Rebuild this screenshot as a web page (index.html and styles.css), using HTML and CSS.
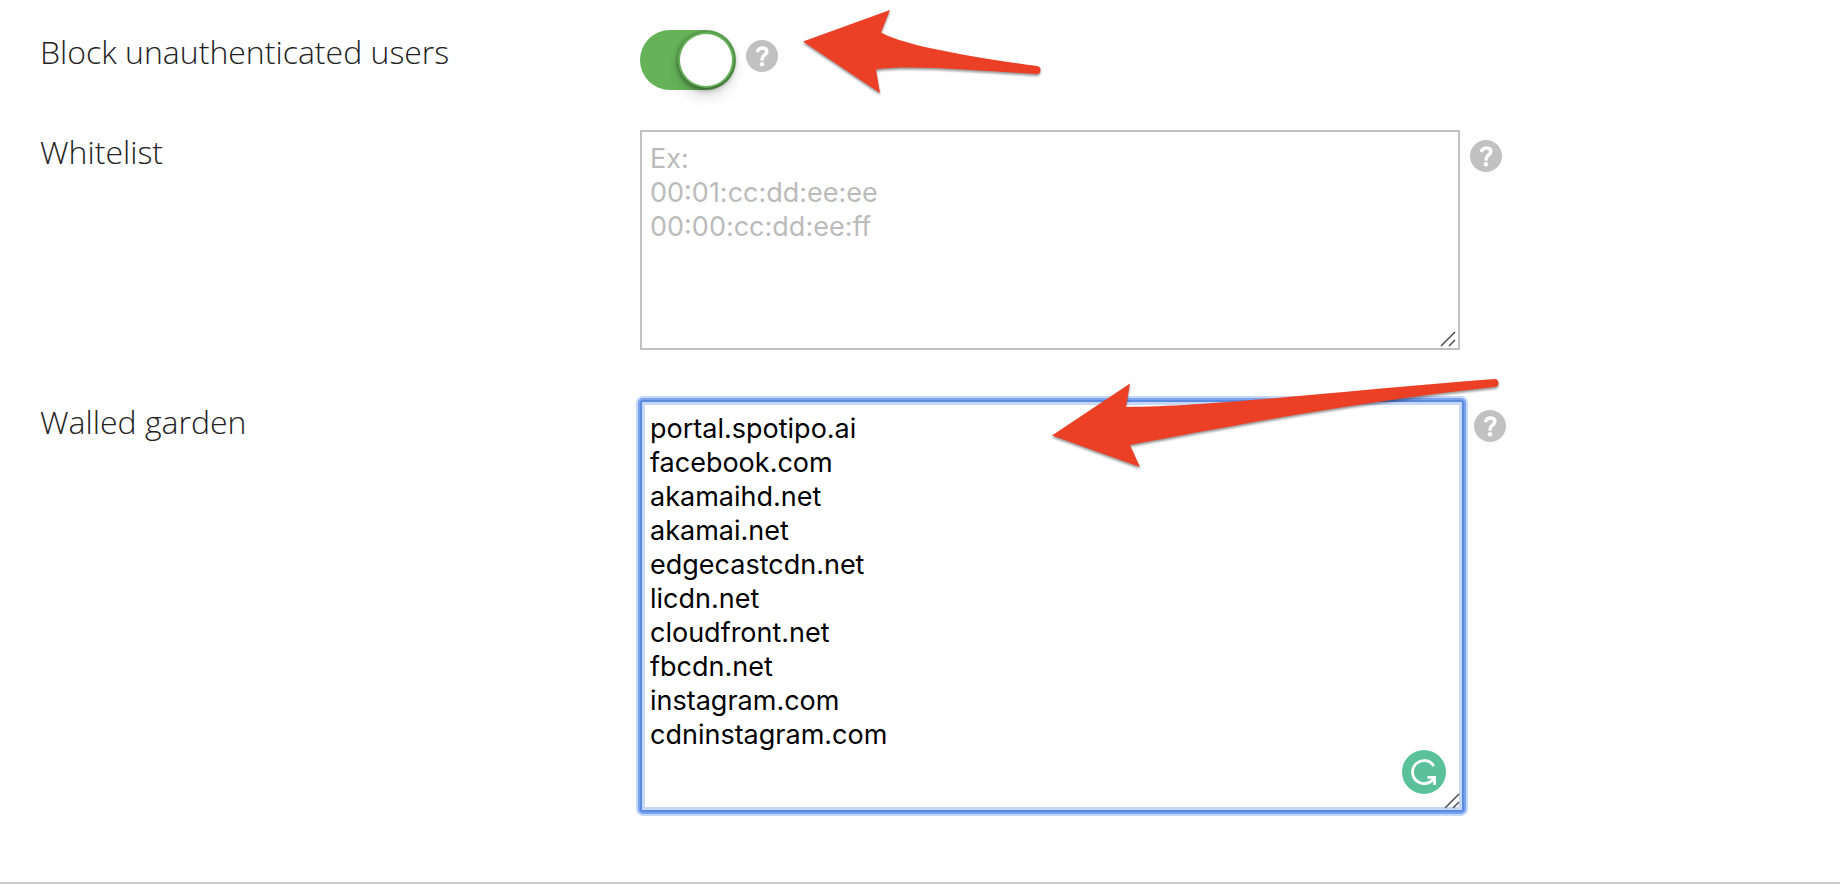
FILE: index.html
```
<!DOCTYPE html>
<html lang="en">

<head>
    <meta charset="utf-8">
    <meta name="viewport" content="width=device-width, initial-scale=1.0">
    <title>Guest access settings</title>
    <link rel="stylesheet" href="styles.css">
</head>

<body>
    <svg class="symbols" aria-hidden="true">
        <symbol id="help" viewBox="0 0 32 32">
            <circle cx="16" cy="16" r="16" fill="#c1c1c1" />
            <path d="M11.8 10.6C13.8 7 20.8 6.8 20.8 11.6C20.8 15.4 16.1 15 16.1 19.2" fill="none" stroke="#fff" stroke-width="3.6" stroke-linecap="round" />
            <circle cx="16" cy="24.2" r="2.2" fill="#fff" />
        </symbol>
        <symbol id="grip" viewBox="0 0 20 20">
            <path d="M2 16L16 2M10 16L16 10" fill="none" stroke="#555" stroke-width="1.6" />
        </symbol>
    </svg>

    <form class="settings">
        <div class="row">
            <label for="block">Block unauthenticated users</label>
            <div class="control">
                <input type="checkbox" id="block" class="switch" checked>
                <button type="button" class="help" aria-label="Help"><svg><use href="#help" /></svg></button>
                <svg class="arrow arrow-block" viewBox="0 0 250 100" aria-hidden="true">
                    <path d="M3 36.5L90 5L81 27.5C108 43 200 56 237 61A4 4 0 0 1 236 69C180 66 110 59 76 64.5L80 88Z" />
                </svg>
            </div>
        </div>

        <div class="row">
            <label for="whitelist">Whitelist</label>
            <div class="control">
                <div class="field">
                    <textarea id="whitelist" class="short" placeholder="Ex:
00:01:cc:dd:ee:ee
00:00:cc:dd:ee:ff"></textarea>
                    <svg class="grip"><use href="#grip" /></svg>
                </div>
                <button type="button" class="help" aria-label="Help"><svg><use href="#help" /></svg></button>
            </div>
        </div>

        <div class="row">
            <label for="garden">Walled garden</label>
            <div class="control">
                <div class="field wide">
                    <textarea id="garden" class="tall active" spellcheck="false">portal.spotipo.ai
facebook.com
akamaihd.net
akamai.net
edgecastcdn.net
licdn.net
cloudfront.net
fbcdn.net
instagram.com
cdninstagram.com</textarea>
                    <svg class="checker" viewBox="0 0 44 44" aria-hidden="true">
                        <circle cx="22" cy="22" r="22" fill="#5bc19c" />
                        <path d="M31.8 16A11.5 11.5 0 1 0 31.5 28.6" fill="none" stroke="#fff" stroke-width="2.8" />
                        <path d="M25.5 27.3H32.6V35" fill="none" stroke="#fff" stroke-width="2.8" />
                    </svg>
                    <svg class="grip"><use href="#grip" /></svg>
                </div>
                <button type="button" class="help" aria-label="Help"><svg><use href="#help" /></svg></button>
                <svg class="arrow arrow-garden" viewBox="0 0 455 105" aria-hidden="true">
                    <path d="M2 65.5L80 13.5L76 37C160 37 310 19 444 9A4 4 0 0 1 445 17C310 31 170 58 80 75L90 97Z" />
                </svg>
            </div>
        </div>
    </form>
</body>

</html>
```

FILE: styles.css
```
* {
    padding: 0;
    margin: 0;
    box-sizing: border-box;
}

body {
    background-color: #fefefe;
    font-family: "Open Sans", sans-serif;
    color: #222;
}

.symbols {
    position: absolute;
    width: 0;
    height: 0;
}

.settings {
    display: grid;
    padding: 30px 40px 70px;
    border-bottom: 2px solid #ccc;
}

.row {
    display: grid;
    grid-template-columns: minmax(200px, 600px) minmax(0, 1fr);
}

.row label {
    font-size: 32px;
    font-weight: 300;
    line-height: 44px;
}

.control {
    position: relative;
    display: flex;
    align-items: flex-start;
    gap: 10px;
    margin-bottom: 50px;
}

.row:first-child .control {
    margin-bottom: 40px;
}

.row:last-child .control {
    margin-bottom: 0;
}

.switch {
    appearance: none;
    display: flex;
    justify-content: flex-end;
    width: 96px;
    height: 60px;
    padding: 4px;
    border-radius: 30px;
    background-color: #65b258;
    cursor: pointer;
}

.switch::before {
    content: "";
    width: 52px;
    height: 52px;
    border-radius: 50%;
    background-color: #fff;
    box-shadow: 0 0 0 2px #65b258, 0 1px 4px 3px rgba(0, 0, 0, 0.35), 0 8px 14px rgba(0, 0, 0, 0.2);
}

.switch:not(:checked) {
    justify-content: flex-start;
    background-color: #ccc;
}

.help {
    flex: none;
    width: 32px;
    height: 32px;
    margin-top: 10px;
    border: none;
    border-radius: 50%;
    background: none;
    cursor: pointer;
}

.help svg {
    display: block;
    width: 32px;
    height: 32px;
}

.field {
    position: relative;
    flex: 0 1 820px;
}

.wide {
    flex-basis: 824px;
}

textarea {
    display: block;
    width: 100%;
    padding: 10px 8px;
    border: 2px solid #c1c1c1;
    background-color: #fff;
    color: #000;
    font-family: Inter, sans-serif;
    font-size: 27px;
    line-height: 34px;
    resize: none;
    outline: none;
}

textarea::placeholder {
    color: #bbb;
    opacity: 1;
}

.short {
    height: 220px;
}

.tall {
    height: 412px;
}

textarea:focus,
.active {
    border-color: #5b8be0;
    border-radius: 3px;
    box-shadow: 0 0 0 2px #7aa4f2, 0 0 0 4px #c6d7f9, inset 0 0 0 3px #c6d7f9;
}

.grip {
    position: absolute;
    right: 1px;
    bottom: 0;
    width: 20px;
    height: 20px;
    pointer-events: none;
}

.checker {
    position: absolute;
    right: 18px;
    bottom: 18px;
    width: 44px;
    height: 44px;
}

.arrow {
    position: absolute;
    fill: #ec4026;
    filter: drop-shadow(0 2px 1px rgba(0, 0, 0, 0.4));
    pointer-events: none;
}

.arrow-block {
    left: 160px;
    top: -25px;
    width: 250px;
    height: 100px;
}

.arrow-garden {
    left: 410px;
    top: -30px;
    width: 455px;
    height: 105px;
}
```
